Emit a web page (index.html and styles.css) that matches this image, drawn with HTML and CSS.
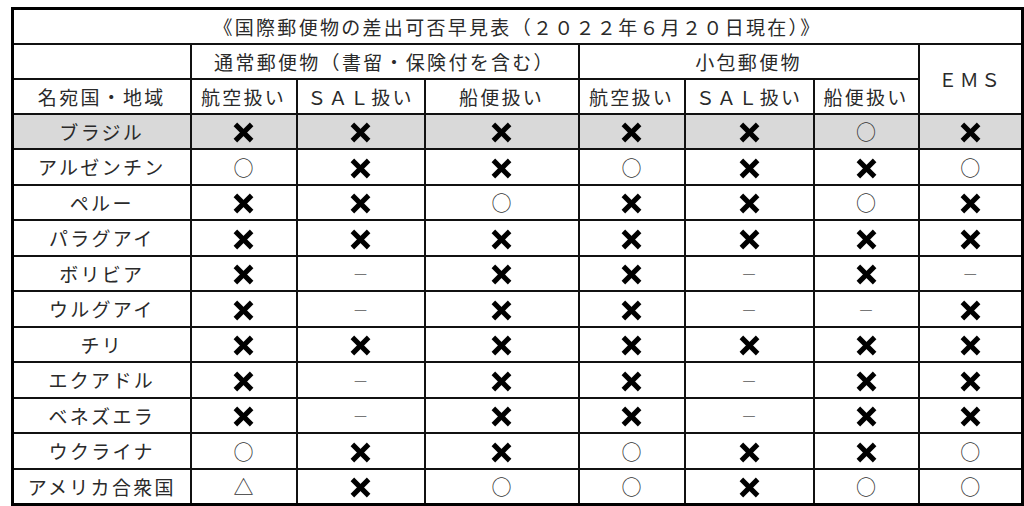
FILE: index.html
```html
<!DOCTYPE html>
<html lang="ja">
<head>
<meta charset="utf-8">
<title>国際郵便物の差出可否早見表</title>
<link rel="stylesheet" href="styles.css">
</head>
<body>
<div class="page">
<table class="chart">
  <colgroup>
    <col class="c-country">
    <col class="c-air">
    <col class="c-sal">
    <col class="c-ship">
    <col class="c-air2">
    <col class="c-sal2">
    <col class="c-ship2">
    <col class="c-ems">
  </colgroup>
  <thead>
    <tr class="title-row"><th colspan="8">《国際郵便物の差出可否早見表（２０２２年６月２０日現在）》</th></tr>
    <tr class="head-row">
      <th></th>
      <th colspan="3">通常郵便物（書留・保険付を含む）</th>
      <th colspan="3">小包郵便物</th>
      <th rowspan="2">ＥＭＳ</th>
    </tr>
    <tr class="head-row">
      <th>名宛国・地域</th>
      <th>航空扱い</th>
      <th>ＳＡＬ扱い</th>
      <th>船便扱い</th>
      <th>航空扱い</th>
      <th>ＳＡＬ扱い</th>
      <th>船便扱い</th>
    </tr>
  </thead>
  <tbody>
    <tr class="hl"><td>ブラジル</td><td><i class="x"></i></td><td><i class="x"></i></td><td><i class="x"></i></td><td><i class="x"></i></td><td><i class="x"></i></td><td class="o">○</td><td><i class="x"></i></td></tr>
    <tr><td>アルゼンチン</td><td class="o">○</td><td><i class="x"></i></td><td><i class="x"></i></td><td class="o">○</td><td><i class="x"></i></td><td><i class="x"></i></td><td class="o">○</td></tr>
    <tr><td>ペルー</td><td><i class="x"></i></td><td><i class="x"></i></td><td class="o">○</td><td><i class="x"></i></td><td><i class="x"></i></td><td class="o">○</td><td><i class="x"></i></td></tr>
    <tr><td>パラグアイ</td><td><i class="x"></i></td><td><i class="x"></i></td><td><i class="x"></i></td><td><i class="x"></i></td><td><i class="x"></i></td><td><i class="x"></i></td><td><i class="x"></i></td></tr>
    <tr><td>ボリビア</td><td><i class="x"></i></td><td class="d">－</td><td><i class="x"></i></td><td><i class="x"></i></td><td class="d">－</td><td><i class="x"></i></td><td class="d">－</td></tr>
    <tr><td>ウルグアイ</td><td><i class="x"></i></td><td class="d">－</td><td><i class="x"></i></td><td><i class="x"></i></td><td class="d">－</td><td class="d">－</td><td><i class="x"></i></td></tr>
    <tr><td>チリ</td><td><i class="x"></i></td><td><i class="x"></i></td><td><i class="x"></i></td><td><i class="x"></i></td><td><i class="x"></i></td><td><i class="x"></i></td><td><i class="x"></i></td></tr>
    <tr><td>エクアドル</td><td><i class="x"></i></td><td class="d">－</td><td><i class="x"></i></td><td><i class="x"></i></td><td class="d">－</td><td><i class="x"></i></td><td><i class="x"></i></td></tr>
    <tr><td>ベネズエラ</td><td><i class="x"></i></td><td class="d">－</td><td><i class="x"></i></td><td><i class="x"></i></td><td class="d">－</td><td><i class="x"></i></td><td><i class="x"></i></td></tr>
    <tr><td>ウクライナ</td><td class="o">○</td><td><i class="x"></i></td><td><i class="x"></i></td><td class="o">○</td><td><i class="x"></i></td><td><i class="x"></i></td><td class="o">○</td></tr>
    <tr><td>アメリカ合衆国</td><td class="o">△</td><td><i class="x"></i></td><td class="o">○</td><td class="o">○</td><td><i class="x"></i></td><td class="o">○</td><td class="o">○</td></tr>
  </tbody>
</table>
</div>
</body>
</html>
```

FILE: styles.css
```css
html, body {
  margin: 0;
  padding: 0;
  background: #ffffff;
}

.page {
  padding: 7px 3px 0 11px;
}

.chart {
  border-collapse: collapse;
  table-layout: fixed;
  width: 1010px;
  border: 3px solid #000;
  font-family: "Noto Sans CJK JP", "Noto Sans", sans-serif;
  font-size: 19px;
  letter-spacing: 2.3px;
  color: #2a2a2a;
}

.c-country { width: 178px; }
.c-air { width: 106px; }
.c-sal { width: 128px; }
.c-ship { width: 154px; }
.c-air2 { width: 106px; }
.c-sal2 { width: 129px; }
.c-ship2 { width: 105px; }
.c-ems { width: 104px; }

.chart th,
.chart td {
  border: 2px solid #111;
  padding: 0;
  text-align: center;
  vertical-align: middle;
  font-weight: 400;
  line-height: 1;
  white-space: nowrap;
}

.title-row { height: 35px; }
.head-row { height: 35px; }
.chart tbody tr { height: 35.5px; }

.chart tbody tr.hl td {
  background: #d9d9d9;
}

.chart td.o {
  font-size: 20px;
  letter-spacing: 0;
  color: #333;
  padding-top: 2px;
}

.chart td.d {
  font-size: 16px;
  letter-spacing: 0;
  color: #777;
}

.x {
  display: inline-block;
  position: relative;
  width: 20px;
  height: 20px;
  vertical-align: middle;
}

.x::before,
.x::after {
  content: "";
  position: absolute;
  left: -1.5px;
  top: 7.5px;
  width: 23px;
  height: 5px;
  background: #000;
}

.x::before { transform: rotate(45deg); }
.x::after { transform: rotate(-45deg); }
```
